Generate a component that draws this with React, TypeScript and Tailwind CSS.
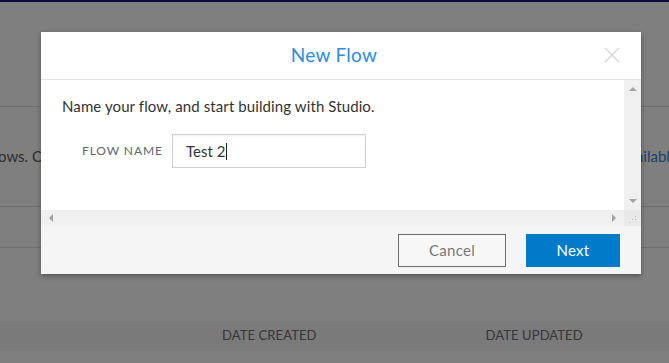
import React from 'react';

const font = { fontFamily: 'Lato, "Open Sans", sans-serif' };

const ScrollArrow = ({ dir }: { dir: 'up' | 'down' | 'left' | 'right' }) => {
    const shapes: Record<string, string> = {
        up: 'M0 5 L4 1 L8 5 Z',
        down: 'M0 1 L8 1 L4 5 Z',
        left: 'M5 0 L5 8 L1 4 Z',
        right: 'M1 0 L5 4 L1 8 Z',
    };
    const vertical = dir === 'up' || dir === 'down';
    return (
        <svg width={vertical ? 8 : 6} height={vertical ? 6 : 8} viewBox={vertical ? '0 0 8 6' : '0 0 6 8'}>
            <path d={shapes[dir]} fill="#a3a3a3" />
        </svg>
    );
};

const Modal = () => {
    return (
        <div className="w-[600px] bg-white shadow-[0_2px_5px_rgba(0,0,0,0.35)] flex flex-col">
            {/* header */}
            <div className="h-[48px] border-b border-[#e6e6e6] flex items-center relative pr-[14px]">
                <h2 className="flex-1 text-center text-[19px] text-[#2b8ce6] font-normal tracking-[0.3px]">New Flow</h2>
                <button className="absolute right-[21px] top-[15px] w-[16px] h-[16px]">
                    <svg width="16" height="16" viewBox="0 0 16 16">
                        <path d="M1 1 L15 15 M15 1 L1 15" stroke="#d4d4d4" strokeWidth="1.3" />
                    </svg>
                </button>
            </div>

            {/* scrolling body with drawn scrollbars */}
            <div className="flex flex-col">
                <div className="flex h-[130px]">
                    <div className="flex-1 pl-[21px] pt-[15px]">
                        <p className="text-[15px] text-[#333] leading-[22px] tracking-[0.1px]">Name your flow, and start building with Studio.</p>
                        <div className="flex items-center mt-[17px] pl-[20px]">
                            <span className="w-[90px] text-[12px] tracking-[0.9px] text-[#5d6670]">FLOW NAME</span>
                            <div className="w-[194px] h-[34px] border border-[#cfcfcf] shadow-[inset_0_1px_2px_rgba(0,0,0,0.06)] flex items-center pl-[13px] text-[15px] text-[#333]">
                                <span>Test 2</span>
                                <span className="inline-block w-px h-[17px] bg-[#222] ml-px"></span>
                            </div>
                        </div>
                    </div>
                    <div className="w-[17px] bg-[#f0f0f0] flex flex-col items-center justify-between py-[6px]">
                        <ScrollArrow dir="up" />
                        <ScrollArrow dir="down" />
                    </div>
                </div>
                <div className="flex h-[16px]">
                    <div className="flex-1 bg-[#f0f0f0] flex items-center justify-between px-[7px]">
                        <ScrollArrow dir="left" />
                        <ScrollArrow dir="right" />
                    </div>
                    <div className="w-[17px] bg-[#e9e9e9] relative">
                        <span className="absolute left-[11px] top-[6px] w-px h-px bg-[#bbb]"></span>
                        <span className="absolute left-[8px] top-[9px] w-px h-px bg-[#bbb]"></span>
                        <span className="absolute left-[11px] top-[9px] w-px h-px bg-[#bbb]"></span>
                        <span className="absolute left-[5px] top-[12px] w-px h-px bg-[#bbb]"></span>
                    </div>
                </div>
            </div>

            {/* footer */}
            <div className="h-[48px] bg-[#f5f5f5] flex items-center justify-end gap-[20px] pr-[21px]">
                <button className="w-[108px] h-[33px] border border-[#6e6e6e] bg-[#f7f7f7] text-[15px] text-[#777] tracking-[0.3px]">Cancel</button>
                <button className="w-[94px] h-[33px] bg-[#007bc9] text-[15px] text-white tracking-[0.3px]">Next</button>
            </div>
        </div>
    );
};

export default function App() {
    return (
        <div className="relative w-[669px] h-[363px] overflow-hidden bg-white" style={font}>
            {/* page behind the dialog */}
            <div className="flex flex-col">
                <div className="h-[2px] bg-[#1a1676]"></div>
                <div className="h-[105px] border-b border-[#dedede]"></div>
                <div className="h-[100px] border-b border-[#dedede] flex items-center">
                    <div className="w-[619px] flex-none whitespace-nowrap text-[15px] text-[#5a5a5a]">
                        <span className="-ml-[2px]">ows. Create</span>
                    </div>
                    <span className="whitespace-nowrap text-[15px] text-[#3d7fd2] ml-[2px]">available</span>
                </div>
                <div className="h-[41px] border-b border-[#dedede]"></div>
                <div className="h-[73px]"></div>
                <div className="h-[30px] bg-[#f4f4f4] flex items-center text-[13px] tracking-[0.1px] text-[#707070]">
                    <span className="ml-[222px]">DATE CREATED</span>
                    <span className="ml-[169px]">DATE UPDATED</span>
                </div>
            </div>

            {/* dimming overlay with dialog */}
            <div className="absolute inset-0 bg-black/50 pt-[32px] pl-[41px]">
                <Modal />
            </div>
        </div>
    );
}
